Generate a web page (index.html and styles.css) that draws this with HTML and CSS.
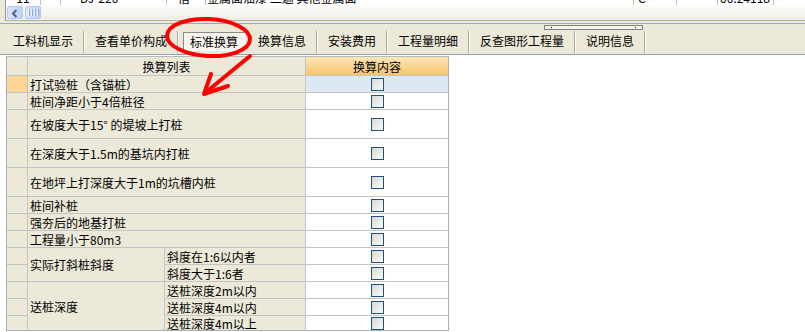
FILE: index.html
```html
<!DOCTYPE html>
<html lang="zh-CN">
<head>
    <meta charset="UTF-8">
    <title>标准换算</title>
    <link rel="stylesheet" href="styles.css">
</head>
<body>

<div class="upper">
    <div class="list-frame">
        <div class="last-row">
            <div class="row-cells">
                <div class="c c-no">11</div>
                <div class="c c-a"></div>
                <div class="c c-code">DJ-220</div>
                <div class="c c-unit">借</div>
                <div class="c c-name">金属面油漆 二遍 其他金属面</div>
                <div class="c c-b">C</div>
                <div class="c c-c"></div>
                <div class="c c-d">00.24118</div>
                <div class="c c-e"></div>
            </div>
        </div>
        <div class="hscroll">
            <div class="sb-btn">
                <svg width="14" height="13" viewBox="0 0 14 13"><path d="M8.5 3 L5 6.5 L8.5 10" fill="none" stroke="#4d6185" stroke-width="2"/></svg>
            </div>
            <div class="sb-thumb"><span></span><span></span><span></span><span></span></div>
        </div>
    </div>
</div>

<div class="tabbar">
    <div class="grip-row"><div class="grip"><i></i><i></i></div></div>
    <div class="tabs">
        <div class="tab">工料机显示</div>
        <div class="sep"></div>
        <div class="tab">查看单价构成</div>
        <div class="sep"></div>
        <div class="tab active">标准换算</div>
        <div class="tab">换算信息</div>
        <div class="sep"></div>
        <div class="tab">安装费用</div>
        <div class="sep"></div>
        <div class="tab">工程量明细</div>
        <div class="sep"></div>
        <div class="tab">反查图形工程量</div>
        <div class="sep"></div>
        <div class="tab">说明信息</div>
        <div class="sep"></div>
    </div>
</div>

<div class="grid">
    <div class="rh"></div>
    <div class="hd span2">换算列表</div>
    <div class="hd hd-on">换算内容</div>

    <div class="rh rh-on"></div>
    <div class="name span2">打试验桩（含锚桩）</div>
    <div class="chk chk-on"><span class="cb"></span></div>

    <div class="rh"></div>
    <div class="name span2">桩间净距小于4倍桩径</div>
    <div class="chk"><span class="cb"></span></div>

    <div class="rh"></div>
    <div class="name span2">在坡度大于15° 的堤坡上打桩</div>
    <div class="chk"><span class="cb"></span></div>

    <div class="rh"></div>
    <div class="name span2">在深度大于1.5m的基坑内打桩</div>
    <div class="chk"><span class="cb"></span></div>

    <div class="rh"></div>
    <div class="name span2">在地坪上打深度大于1m的坑槽内桩</div>
    <div class="chk"><span class="cb"></span></div>

    <div class="rh"></div>
    <div class="name span2">桩间补桩</div>
    <div class="chk"><span class="cb"></span></div>

    <div class="rh"></div>
    <div class="name span2">强夯后的地基打桩</div>
    <div class="chk"><span class="cb"></span></div>

    <div class="rh"></div>
    <div class="name span2">工程量小于80m3</div>
    <div class="chk"><span class="cb"></span></div>

    <div class="rh"></div>
    <div class="name rows2">实际打斜桩斜度</div>
    <div class="name">斜度在1:6以内者</div>
    <div class="chk"><span class="cb"></span></div>

    <div class="rh"></div>
    <div class="name">斜度大于1:6者</div>
    <div class="chk"><span class="cb"></span></div>

    <div class="rh"></div>
    <div class="name rows3">送桩深度</div>
    <div class="name">送桩深度2m以内</div>
    <div class="chk"><span class="cb"></span></div>

    <div class="rh"></div>
    <div class="name">送桩深度4m以内</div>
    <div class="chk"><span class="cb"></span></div>

    <div class="rh"></div>
    <div class="name">送桩深度4m以上</div>
    <div class="chk"><span class="cb"></span></div>
</div>

<!-- red hand-drawn marks over the screenshot -->
<svg class="marks" width="805" height="332" viewBox="0 0 805 332">
    <ellipse cx="208.5" cy="37.5" rx="41.5" ry="18.5" fill="none" stroke="#f00" stroke-width="4" transform="rotate(3 208.5 37.5)"/>
    <path d="M250 56 L205 93" fill="none" stroke="#f00" stroke-width="4" stroke-linecap="round"/>
    <path d="M211 74 L204 94 L228 86" fill="none" stroke="#f00" stroke-width="4" stroke-linecap="round" stroke-linejoin="round"/>
</svg>

</body>
</html>
```

FILE: styles.css
```css
body {
    margin: 0;
    width: 805px;
    height: 332px;
    overflow: hidden;
    position: relative;
    background-color: #fff;
    font-family: "Noto Sans CJK SC", "DejaVu Sans", sans-serif;
    font-size: 12px;
    color: #000;
}

/* upper list (cut off) */
.upper {
    background-color: #ece9d8;
    padding: 0 0 2px 5px;
}
.list-frame {
    border-left: 1px solid #919b9c;
    border-bottom: 1px solid #b0b0a8;
    background-color: #fff;
}
.last-row {
    height: 5px;
    overflow: hidden;
}
.row-cells {
    display: flex;
    margin-top: -9px;
    height: 14px;
    line-height: 14px;
    white-space: nowrap;
}
.c {
    border-right: 1px solid #c0c0c0;
    box-sizing: border-box;
    overflow: hidden;
}
.c-no { width: 35px; text-align: center; }
.c-a { width: 20px; }
.c-code { width: 106px; padding-left: 19px; }
.c-unit { width: 39px; padding-left: 11px; }
.c-name { width: 428px; padding-left: 1px; }
.c-b { width: 43px; padding-left: 4px; }
.c-c { width: 41px; }
.c-d { width: 56px; text-align: right; padding-right: 3px; }
.c-e { flex: 1; border-right: none; }

.hscroll {
    height: 15px;
    display: flex;
    align-items: flex-end;
    gap: 2px;
    padding-left: 1px;
    background: linear-gradient(#fdfdfb, #efede4);
}
.sb-btn,
.sb-thumb {
    width: 16px;
    height: 13px;
    box-sizing: border-box;
    border: 1px solid #b5c8f2;
    border-radius: 2px;
    background: linear-gradient(90deg, #dbe5fc, #bccffa);
    margin-bottom: 1px;
}
.sb-btn svg {
    display: block;
}
.sb-thumb {
    display: flex;
    justify-content: center;
    align-items: center;
    gap: 1px;
}
.sb-thumb span {
    width: 1px;
    height: 7px;
    background-color: #eef3fe;
    border-right: 1px solid #8ca6e0;
}

/* tab bar */
.tabbar {
    background-color: #ece9d8;
    border-top: 1px solid #95a8c4;
    border-bottom: 1px solid #8aa2c2;
    padding-bottom: 1px;
}
.grip-row {
    height: 6px;
    padding: 1px 0 0 544px;
}
.grip {
    width: 99px;
    height: 5px;
    box-sizing: border-box;
    border: 1px solid #808080;
    background-color: #f4f3ee;
    display: flex;
    justify-content: space-between;
    padding: 1px 6px 0;
}
.grip i {
    width: 1px;
    height: 1px;
    background-color: #1010a0;
}
.tabs {
    display: flex;
    height: 22px;
    padding-left: 3px;
}
.tab {
    padding: 0 10px;
    line-height: 20px;
    white-space: nowrap;
}
.tab.active {
    margin: 1px 3px 2px 4px;
    padding: 0 6px;
    line-height: 17px;
    border: 1px solid;
    border-color: #8d8a80 #fff #fff #8d8a80;
    background-color: #f5f4ee;
}
.sep {
    width: 1px;
    border-left: 1px solid #aca899;
    background-color: #fff;
}

/* conversion grid */
.grid {
    display: grid;
    grid-template-columns: 20px 136px 140px 142px;
    grid-template-rows: 18px 16px 16px 28px 28px 28px 16px 16px 16px 16px 16px 16px 16px 14px;
    gap: 1px;
    width: max-content;
    margin: 1px 0 0 6px;
    border: 1px solid #a6b0bf;
    border-top-color: #b8b8b8;
    background-color: #c4c4c4;
}
.rh,
.name,
.hd {
    background-color: #ece9d8;
}
.rh-on {
    background-color: #fdd593;
}
.span2 {
    grid-column: span 2;
}
.rows2 {
    grid-row: span 2;
}
.rows3 {
    grid-row: span 3;
}
.name {
    display: flex;
    align-items: center;
    padding-left: 2px;
    white-space: nowrap;
    overflow: hidden;
}
.hd {
    display: flex;
    align-items: center;
    justify-content: center;
}
.hd-on {
    background: linear-gradient(#fce6b6, #f6c56d);
}
.chk {
    display: flex;
    align-items: center;
    justify-content: center;
    background-color: #fff;
}
.chk-on {
    background-color: #dde8f5;
}
.cb {
    width: 13px;
    height: 13px;
    box-sizing: border-box;
    border: 1px solid #1c5180;
    background: linear-gradient(135deg, #d8d8d2, #fbfbfa);
    margin-left: 1px;
}

.marks {
    position: absolute;
    top: 0;
    left: 0;
    pointer-events: none;
}
```
